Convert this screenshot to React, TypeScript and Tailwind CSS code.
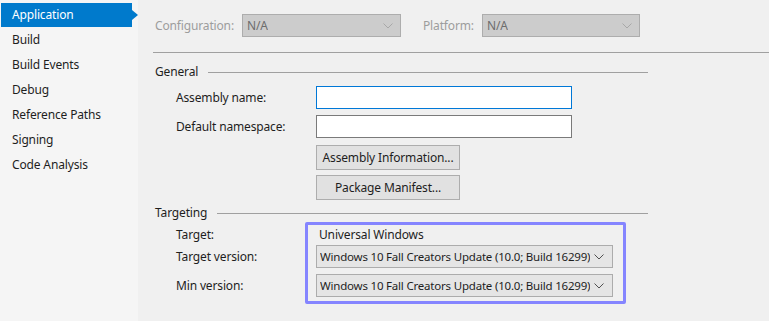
import type { ReactNode } from "react";

const navItems = [
    "Application",
    "Build",
    "Build Events",
    "Debug",
    "Reference Paths",
    "Signing",
    "Code Analysis",
];

function Chevron({ color }: { color: string }) {
    return (
        <svg width="10" height="6" viewBox="0 0 10 6" className="shrink-0">
            <polyline
                points="0.5,0.5 5,5 9.5,0.5"
                fill="none"
                stroke={color}
                strokeWidth="1"
            />
        </svg>
    );
}

function Dropdown({
    value,
    disabled,
    className,
}: {
    value: string;
    disabled?: boolean;
    className: string;
}) {
    return (
        <div
            className={
                disabled
                    ? `flex h-[23px] items-center justify-between border border-[#adadad] bg-[#cccccc] pl-[4px] pr-[7px] text-[#6d6d6d] ${className}`
                    : `flex h-[23px] items-center justify-between border border-[#acacac] bg-[#e5e5e5] pl-[3px] pr-[8px] text-[11.5px] tracking-[-0.2px] text-[#1e1e1e] ${className}`
            }
        >
            <span className="min-w-0 overflow-hidden whitespace-nowrap">{value}</span>
            <Chevron color={disabled ? "#a8a8a8" : "#505050"} />
        </div>
    );
}

function SectionHeader({ title, className }: { title: string; className: string }) {
    return (
        <div className={`flex h-[16px] items-center ${className}`}>
            <span className="leading-none">{title}</span>
            <div className="ml-[10px] h-px flex-1 bg-[#a0a0a0]" />
        </div>
    );
}

function Button({ children, className }: { children: ReactNode; className: string }) {
    return (
        <button
            type="button"
            className={`flex h-[25px] w-[144px] items-center justify-center border border-[#adadad] bg-[#e1e1e1] text-[#1e1e1e] ${className}`}
        >
            {children}
        </button>
    );
}

export default function App() {
    return (
        <div
            className="flex h-[321px] w-[769px] overflow-hidden text-[12px] tracking-[-0.15px] text-[#1e1e1e]"
            style={{ fontFamily: '"Noto Sans", "Open Sans", sans-serif' }}
        >
            {/* sidebar */}
            <div className="w-[138px] shrink-0 bg-[#f5f5f5] pt-[2px]">
                {navItems.map((item, i) =>
                    i === 0 ? (
                        <div key={item} className="flex h-[25px] items-center pl-[1px]">
                            <div className="flex h-[24px] w-[131px] items-center bg-[#007acc] pl-[11px] text-white">
                                {item}
                            </div>
                            <div className="h-0 w-0 border-y-[5px] border-l-[6px] border-y-transparent border-l-[#007acc]" />
                        </div>
                    ) : (
                        <div key={item} className="flex h-[25px] items-center pl-[12px]">
                            {item}
                        </div>
                    )
                )}
            </div>

            {/* main */}
            <div className="flex-1 bg-[#f0f0f0]">
                <div className="ml-[17px] mt-[14px] flex items-center">
                    <span className="w-[87px] text-[#9d9d9d]">Configuration:</span>
                    <Dropdown value="N/A" disabled className="w-[159px]" />
                    <span className="ml-[22px] w-[59px] text-[#9d9d9d]">Platform:</span>
                    <Dropdown value="N/A" disabled className="w-[158px]" />
                </div>

                <div className="ml-[15px] mt-[15px] h-px bg-[#a0a0a0]" />

                <div className="ml-[17px] w-[493px]">
                    <SectionHeader title="General" className="mt-[11px]" />

                    <div className="ml-[21px] mt-[6px] flex items-center">
                        <span className="w-[140px]">Assembly name:</span>
                        <div className="h-[23px] w-[256px] border border-[#0078d7] bg-white" />
                    </div>
                    <div className="ml-[21px] mt-[6px] flex items-center">
                        <span className="w-[140px]">Default namespace:</span>
                        <div className="h-[23px] w-[256px] border border-[#7a7a7a] bg-white" />
                    </div>
                    <div className="ml-[161px] mt-[7px] flex flex-col gap-[5px]">
                        <Button className="">Assembly Information...</Button>
                        <Button className="">Package Manifest...</Button>
                    </div>

                    <SectionHeader title="Targeting" className="mt-[5px]" />

                    <div className="ml-[21px] mt-[1px] flex">
                        <div className="w-[129px] pt-[3px]">
                            <div className="flex h-[20px] items-center">Target:</div>
                            <div className="flex h-[23px] items-center">Target version:</div>
                            <div className="mt-[6px] flex h-[23px] items-center">Min version:</div>
                        </div>
                        <div className="rounded-[2px] border-[3px] border-[#8585ff] pb-[4px] pl-[8px] pr-[10px]">
                            <div className="flex h-[20px] items-center pl-[3px]">Universal Windows</div>
                            <Dropdown
                                value="Windows 10 Fall Creators Update (10.0; Build 16299)"
                                className="w-[297px]"
                            />
                            <Dropdown
                                value="Windows 10 Fall Creators Update (10.0; Build 16299)"
                                className="mt-[6px] w-[297px]"
                            />
                        </div>
                    </div>
                </div>
            </div>
        </div>
    );
}
